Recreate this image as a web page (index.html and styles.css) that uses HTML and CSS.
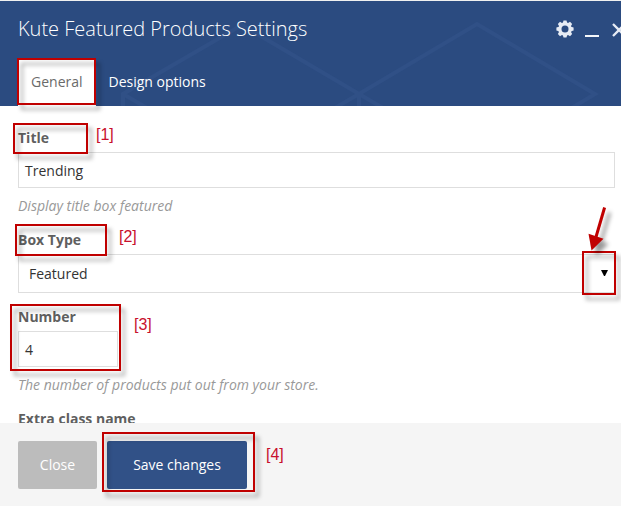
FILE: index.html
```html
<!DOCTYPE html>
<html lang="en">
<head>
<meta charset="utf-8">
<title>Kute Featured Products Settings</title>
<link rel="stylesheet" href="styles.css">
</head>
<body>
<div class="panel">
  <header class="head">
    <svg class="pattern" width="621" height="105" viewBox="0 1 621 105" fill="none">
      <path d="M123 130V94L242 25L359 94L477 24L595 94L535 130M123 94L185 130M359 130V94L297 130M359 94L421 130"/>
    </svg>
    <div class="titlebar">
      <h1>Kute Featured Products Settings</h1>
      <div class="controls">
        <svg width="18" height="18" viewBox="-9 -9 18 18">
          <g fill="#e6ebf4">
            <path id="tooth" d="M-2.2-6L-1.5-8.6H1.5L2.2-6V6L1.5 8.6H-1.5L-2.2 6Z"/>
            <use href="#tooth" transform="rotate(45)"/>
            <use href="#tooth" transform="rotate(90)"/>
            <use href="#tooth" transform="rotate(135)"/>
            <circle r="6.8"/>
          </g>
          <circle r="3.5" fill="#2b4b80"/>
        </svg>
        <span class="minimize"></span>
        <svg class="close-icon" width="14" height="14" viewBox="0 0 14 14"><path d="M1 1L13 13M13 1L1 13" stroke="#e6ebf4" stroke-width="2.3"/></svg>
      </div>
    </div>
    <nav class="tabs">
      <span class="tab active">General</span>
      <span class="tab">Design options</span>
    </nav>
  </header>
  <main class="fields">
    <label class="label">Title</label>
    <div class="input">Trending</div>
    <p class="hint">Display title box featured</p>
    <label class="label">Box Type</label>
    <div class="input select"><span>Featured</span><svg class="caret" width="7" height="6" viewBox="0 0 7 6"><path d="M0 0H7L4 6H3Z"/></svg></div>
    <label class="label number-label">Number</label>
    <div class="input short">4</div>
    <p class="hint">The number of products put out from your store.</p>
    <label class="label">Extra class name</label>
  </main>
  <footer class="foot">
    <span class="button">Close</span>
    <span class="button primary">Save changes</span>
  </footer>
</div>
<div class="mark mark-tab"></div>
<div class="mark mark-title"></div>
<div class="mark mark-type"></div>
<div class="mark mark-number"></div>
<div class="mark mark-save"></div>
<div class="mark mark-caret"></div>
<svg class="arrow" width="30" height="48" viewBox="585 205 30 48"><path d="M604.6 207.5L596 237" stroke="#c00000" stroke-width="3"/><path d="M588.5 233.8L603.5 238.8L591.5 250.5Z" fill="#c00000"/></svg>
<span class="note note-1">[1]</span>
<span class="note note-2">[2]</span>
<span class="note note-3">[3]</span>
<span class="note note-4">[4]</span>
</body>
</html>
```
FILE: styles.css
```css
* { box-sizing: border-box; }
body {
  margin: 0;
  width: 621px;
  height: 506px;
  position: relative;
  overflow: hidden;
  background: #fff;
  font: 14px/20px "Open Sans", sans-serif;
}
.panel {
  height: 506px;
  display: flex;
  flex-direction: column;
  border-top: 1px solid #f0f0f0;
}
.head {
  position: relative;
  flex: none;
  height: 105px;
  background: #2b4b80;
  color: #fff;
  overflow: hidden;
}
.pattern { position: absolute; left: 0; top: 0; stroke: #305086; stroke-width: 4; }
.titlebar {
  position: relative;
  display: flex;
  height: 57px;
  padding-left: 18px;
}
h1 { margin: 0; width: 538px; flex: none; font-size: 20px; line-height: 56px; font-weight: 300; white-space: nowrap; }
.controls { display: flex; flex: none; padding-top: 19px; }
.controls svg { flex: none; }
.minimize { width: 14px; height: 2px; margin: 15px 13px 0 11px; background: #f4f6fa; }
.close-icon { margin-top: 3px; }
.tabs { position: relative; display: flex; height: 48px; padding-left: 18px; line-height: 47px; }
.tab { padding: 0 12.5px; }
.tab.active { width: 78px; padding-left: 13px; background: #fff; color: #6a6a6a; }
.fields {
  flex: none;
  height: 317px;
  padding: 22px 6px 0 18px;
  overflow: hidden;
}
.label { display: block; height: 24px; font-weight: 700; line-height: 20px; color: #5f5f5f; }
.input {
  height: 36px;
  border: 1px solid #dedede;
  padding: 0 6px;
  line-height: 35px;
  color: #333;
}
.hint { margin: 0 0 14px; padding-top: 8px; height: 28px; font-style: italic; color: #999; }
.select {
  display: flex;
  align-items: center;
  justify-content: space-between;
  height: 39px;
  padding: 0 6px 0 10px;
}
.caret { margin-bottom: 1px; }
.number-label { margin-top: 14px; }
.short { width: 100px; }
.foot {
  flex: 1;
  display: flex;
  gap: 10px;
  padding: 18px;
  background: #f5f5f5;
}
.button {
  width: 79px;
  height: 48px;
  border-radius: 2px;
  line-height: 48px;
  text-align: center;
  background: #bcbcbc;
  color: #fff;
}
.primary { width: 140px; background: #315187; }
.mark {
  position: absolute;
  border: 2px solid #c00000;
  filter: drop-shadow(4px 5px 2px rgba(0, 0, 0, .35));
}
.mark-tab { left: 17px; top: 58px; width: 79px; height: 47px; }
.mark-title { left: 13px; top: 123px; width: 75px; height: 31px; }
.mark-type { left: 15px; top: 224px; width: 92px; height: 32px; }
.mark-number { left: 10px; top: 304px; width: 111px; height: 67px; }
.mark-save { left: 102px; top: 432px; width: 153px; height: 60px; }
.mark-caret { left: 582px; top: 251px; width: 34px; height: 44px; }
.arrow { position: absolute; left: 585px; top: 205px; overflow: visible; filter: drop-shadow(5px 5px 2px rgba(0, 0, 0, .4)); }
.note { position: absolute; font: 16px/18px "Liberation Sans", sans-serif; color: #c8102e; }
.note-1 { left: 96px; top: 126px; }
.note-2 { left: 119px; top: 228px; }
.note-3 { left: 134px; top: 316px; }
.note-4 { left: 266px; top: 446px; }
```
